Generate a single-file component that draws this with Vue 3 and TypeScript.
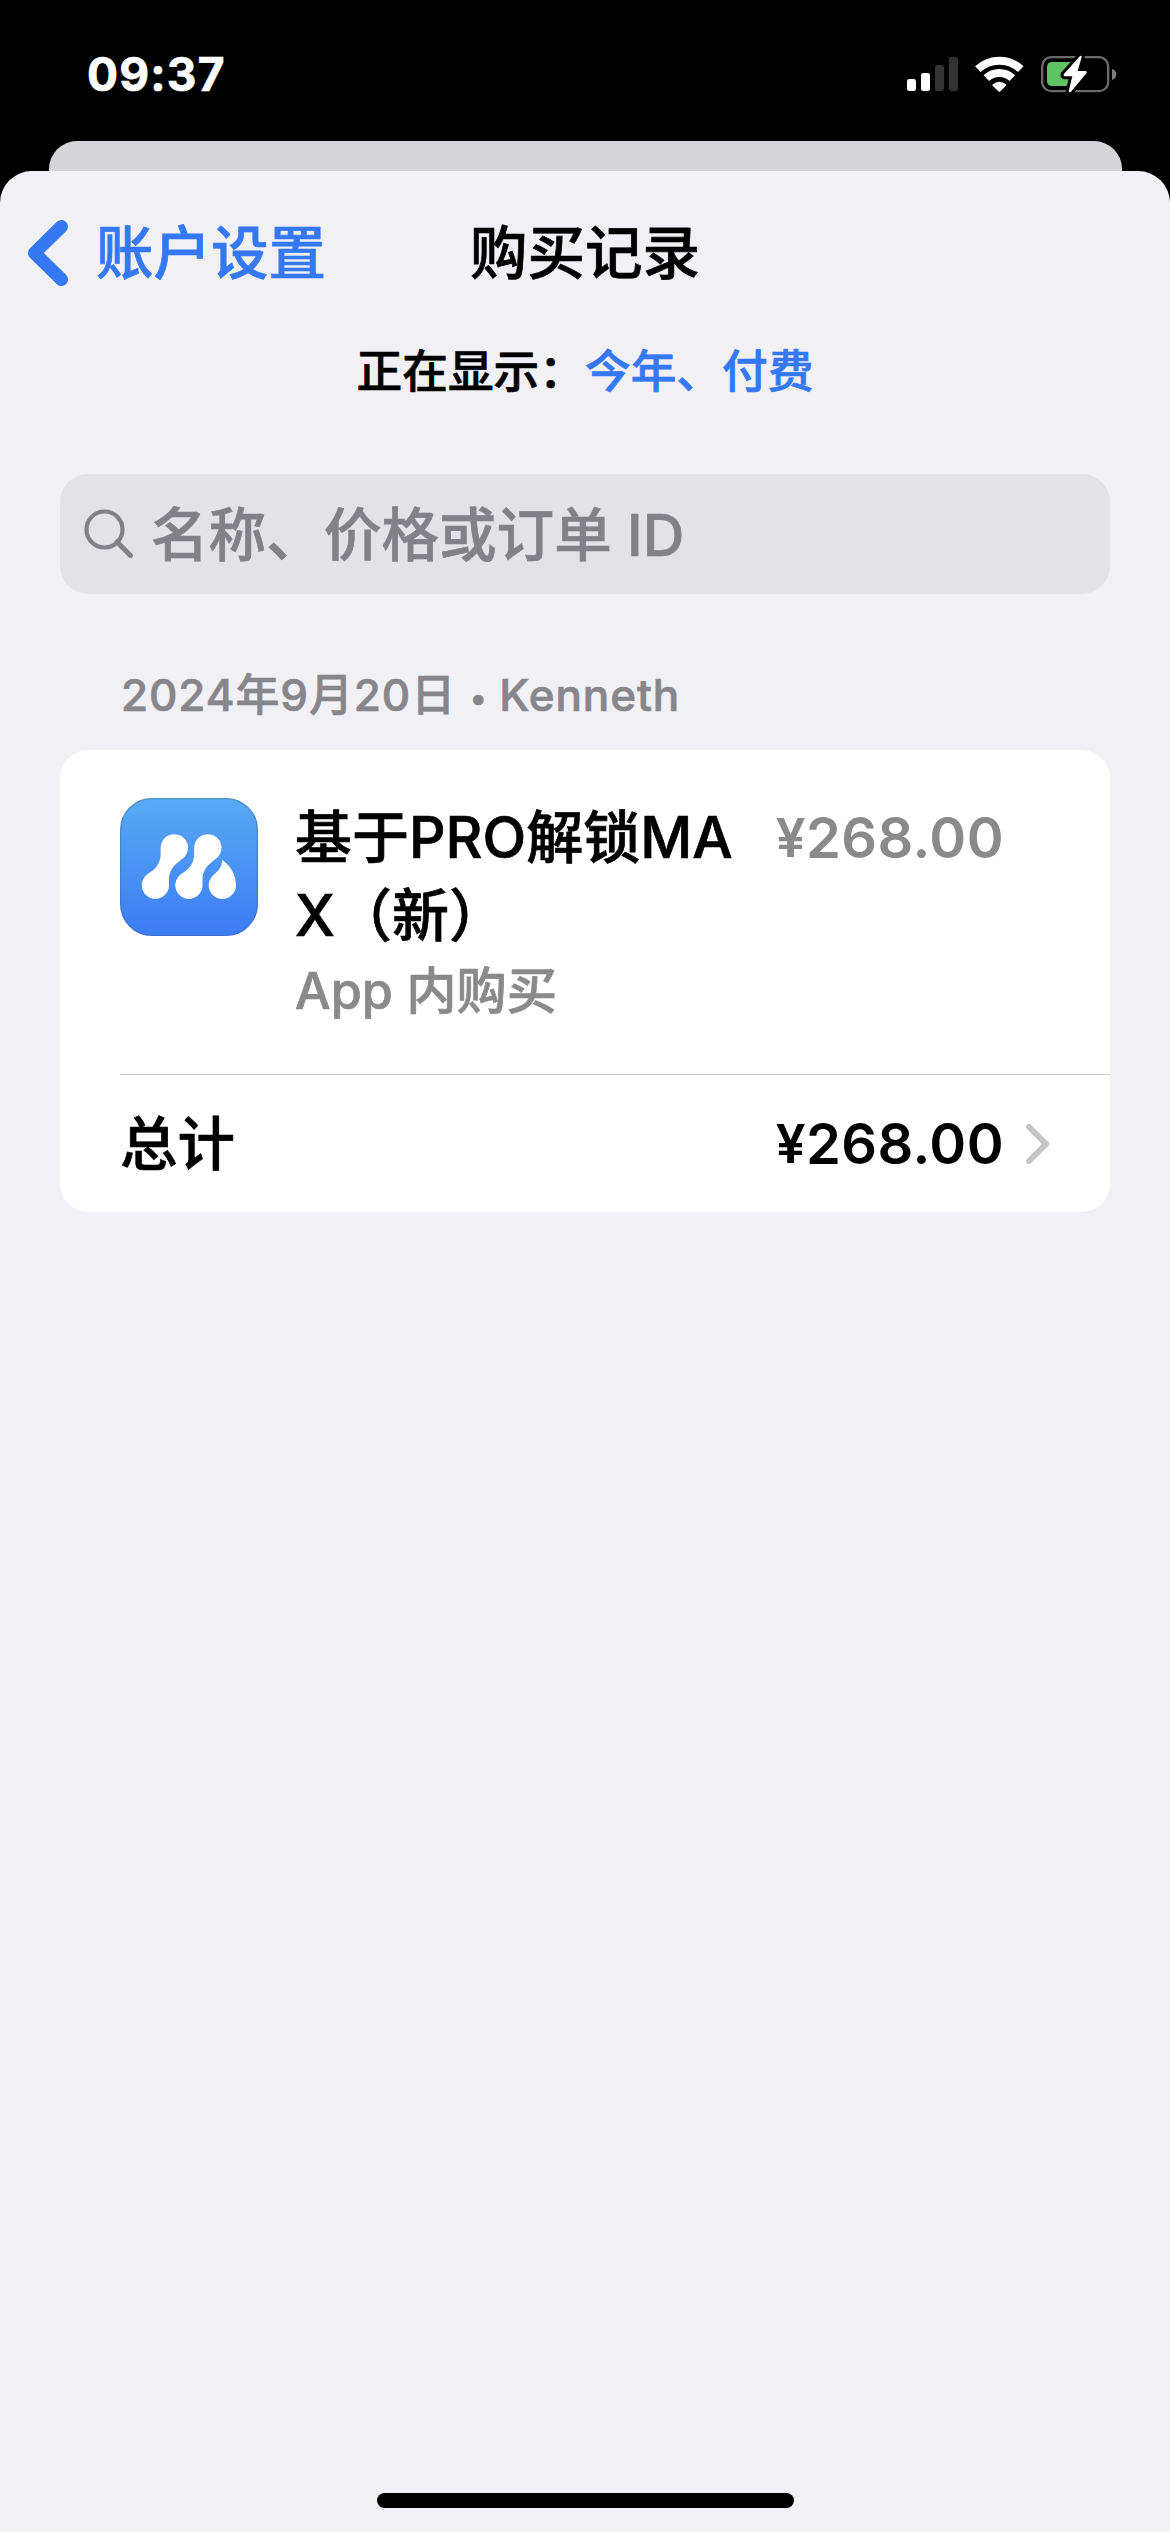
<script setup lang="ts">
interface Purchase {
  name: string
  kind: string
  amount: string
}

const time = '09:37'
const purchase: Purchase = {
  name: '基于PRO解锁MAX（新）',
  kind: 'App 内购买',
  amount: '268.00',
}
const total = '268.00'
</script>

<template>
  <div class="screen">
    <header class="status">
      <span class="time">{{ time }}</span>
      <div class="indicators">
        <svg width="51" height="34" viewBox="141 111 153 102">
          <rect x="141" y="177" width="27" height="36" rx="7" fill="#fff" />
          <rect x="183" y="159" width="27" height="54" rx="7" fill="#fff" />
          <rect x="225" y="135" width="27" height="78" rx="7" fill="#333" />
          <rect x="267" y="111" width="27" height="102" rx="7" fill="#333" />
        </svg>
        <svg width="49" height="36" viewBox="344 105 147 108">
          <g fill="none" stroke="#fff" stroke-width="24">
            <path d="M352.500 144.500A94 94 0 0 1 481.500 144.500" />
            <path d="M378 171.500A57 57 0 0 1 456 171.500" />
          </g>
          <path d="M397 190Q417 174 437 190Q439 192 437 194L420 211Q417 214 414 211L397 194Q395 192 397 190Z" fill="#fff" />
        </svg>
        <svg width="76" height="38" viewBox="540 105 228 114">
          <rect x="543.500" y="111.500" width="198" height="102" rx="27" fill="none" stroke="#6b6b6b" stroke-width="7" />
          <path d="M753 146Q766 151 766 163Q766 175 753 180Z" fill="#7c7c7c" />
          <path d="M574 126H645V198H574Q558 198 558 182V142Q558 126 574 126Z" fill="#5fc466" />
          <path d="M657 108L608 163Q606 168 611 169H634L623 213Q624 219 630 215L677 159Q679 154 674 153H650L662 111Q661 105 657 108Z" fill="#fff" stroke="#000" stroke-width="18" stroke-linejoin="round" />
          <path d="M645 198V126H667V198Z" fill="#000" />
          <path d="M657 108L608 163Q606 168 611 169H634L623 213Q624 219 630 215L677 159Q679 154 674 153H650L662 111Q661 105 657 108Z" fill="#fff" />
        </svg>
      </div>
    </header>

    <div class="under-sheet"></div>

    <main class="sheet">
      <nav class="nav">
        <a class="back">
          <svg width="42" height="68" viewBox="0 0 42 68">
            <path d="M34.500 7.500L7.500 34L34.500 60.500" fill="none" stroke="#3578f6" stroke-width="13" stroke-linecap="round" stroke-linejoin="round" />
          </svg>
          <span>账户设置</span>
        </a>
        <h1>购买记录</h1>
      </nav>

      <p class="filter">正在显示：<a>今年、付费</a></p>

      <div class="search">
        <svg width="50" height="50" viewBox="0 0 50 50">
          <g fill="none" stroke="#828187" stroke-width="4.200">
            <circle cx="20.500" cy="20.500" r="18" />
            <path d="M33 33L46.500 46.500" stroke-width="5" stroke-linecap="round" />
          </g>
        </svg>
        <span>名称、价格或订单 ID</span>
      </div>

      <h2>2024年9月20日 <span class="dot">•</span> Kenneth</h2>

      <section class="card">
        <div class="item">
          <svg class="app-icon" width="138" height="138" viewBox="60 84 414 414">
            <defs>
              <linearGradient id="sky" x1="0" y1="0" x2="0" y2="1">
                <stop offset="0" stop-color="#58aaf4" />
                <stop offset="1" stop-color="#3c7cf4" />
              </linearGradient>
              <linearGradient id="rim" x1="0" y1="0" x2="0" y2="1">
                <stop offset="0" stop-color="#4a8fc0" />
                <stop offset="1" stop-color="#3a70d6" />
              </linearGradient>
            </defs>
            <rect x="62" y="86" width="410" height="410" rx="94" fill="url(#sky)" stroke="url(#rim)" stroke-width="4" />
            <g fill="#fff">
              <path d="M182 234A41 41 0 1 1 245 268C225 283 207 299 207 330V346A41 41 0 1 1 146 310C166 299 182 280 182 252Z" />
              <path d="M282.500 234A41 41 0 1 1 345.500 268C325.500 283 307.500 299 307.500 330V346A41 41 0 1 1 246.500 310C266.500 299 282.500 280 282.500 252Z" />
              <path d="M366 269C390 286 408 312 408 346A41 41 0 1 1 338 317C352 304 367 294 366 269Z" />
            </g>
          </svg>
          <div class="info">
            <div class="name">{{ purchase.name }}</div>
            <div class="kind">{{ purchase.kind }}</div>
          </div>
          <div class="price muted"><span class="yen">¥</span>{{ purchase.amount }}</div>
        </div>
        <div class="total">
          <span class="label">总计</span>
          <span class="price"><span class="yen">¥</span>{{ total }}</span>
          <svg width="26" height="42" viewBox="0 0 26 42">
            <path d="M4 4L21 21L4 38" fill="none" stroke="#c4c4c6" stroke-width="6" stroke-linecap="round" stroke-linejoin="round" />
          </svg>
        </div>
      </section>

      <div class="home-bar"></div>
    </main>
  </div>
</template>

<style>
body {
  background: #000;
}
</style>

<style scoped>
.screen {
  width: 1170px;
  height: 2532px;
  display: flex;
  flex-direction: column;
  overflow: hidden;
  background: #000;
  font-family: Inter, "Noto Sans CJK SC", sans-serif;
  font-weight: 500;
  color: #000;
  -webkit-text-stroke: 0.7px currentColor;
}
svg {
  display: block;
  flex: none;
}
h1, h2, p {
  margin: 0;
  font-weight: 500;
}
.status {
  height: 141px;
  padding: 7px 53px 0 87px;
  box-sizing: border-box;
  display: flex;
  align-items: center;
  justify-content: space-between;
}
.time {
  font-size: 46px;
  font-weight: 700;
  line-height: 56px;
  letter-spacing: 1.2px;
  color: #fff;
}
.indicators {
  display: flex;
  align-items: center;
  gap: 17px;
}
.under-sheet {
  height: 30px;
  margin: 0 48.5px;
  border-radius: 28px 28px 0 0;
  background: #d5d4d9;
}
.sheet {
  flex: 1;
  display: flex;
  flex-direction: column;
  background: #f1f0f5;
  border-radius: 32px 32px 0 0;
}
.nav {
  height: 164px;
  padding: 0 27px;
  display: grid;
  grid-template-columns: 1fr auto 1fr;
  align-items: center;
  font-size: 57.5px;
  line-height: 78px;
}
.nav h1 {
  font-size: 57.5px;
}
.back {
  display: flex;
  align-items: center;
  gap: 27px;
  color: #3578f6;
}
.filter {
  height: 72px;
  font-size: 45.7px;
  line-height: 74px;
  text-align: center;
}
.filter a {
  color: #3578f6;
}
.search {
  height: 120px;
  margin: 67px 60px 0;
  padding-left: 24px;
  border-radius: 28px;
  display: flex;
  align-items: center;
  gap: 17px;
  background: #e3e2e7;
  color: #828187;
  font-size: 57.6px;
  line-height: 78px;
}
.search span {
  padding-top: 2px;
}
h2 {
  margin: 71px 0 25px 121px;
  font-size: 44px;
  line-height: 60px;
  letter-spacing: 0.9px;
  color: #87868b;
}
.dot {
  display: inline-block;
  width: 17px;
  margin-left: 1px;
  font-size: 32px;
  line-height: 40px;
  vertical-align: 2px;
}
.card {
  margin: 0 60px;
  height: 462px;
  border-radius: 28px;
  background: #fff;
}
.item {
  height: 324px;
  padding: 49px 0 0 60px;
  box-sizing: border-box;
  display: flex;
}
.app-icon {
  margin-top: -1px;
}
.info {
  width: 445px;
  margin-left: 37px;
}
.name {
  font-size: 57px;
  line-height: 78px;
  word-break: break-all;
}
.kind {
  font-size: 50.3px;
  line-height: 71px;
  color: #8a8a8a;
}
.price {
  width: 230px;
  margin-left: 34px;
  font-size: 56px;
  font-weight: 600;
  line-height: 78px;
  text-align: right;
  white-space: nowrap;
  letter-spacing: 0.4px;
  -webkit-text-stroke-width: 0;
}
.yen {
  font-size: 53px;
  line-height: 60px;
  vertical-align: 1px;
}
.muted {
  color: #8a8a8a;
}
.total {
  margin-left: 60px;
  height: 138px;
  padding-right: 59px;
  border-top: 1px solid #c6c6c6;
  box-sizing: border-box;
  display: flex;
  align-items: center;
}
.label {
  flex: 1;
  font-size: 57.5px;
  line-height: 78px;
}
.total svg {
  margin-left: 21px;
}
.home-bar {
  width: 417px;
  height: 15px;
  margin: auto auto 24px;
  border-radius: 8px;
  background: #000;
}
</style>
